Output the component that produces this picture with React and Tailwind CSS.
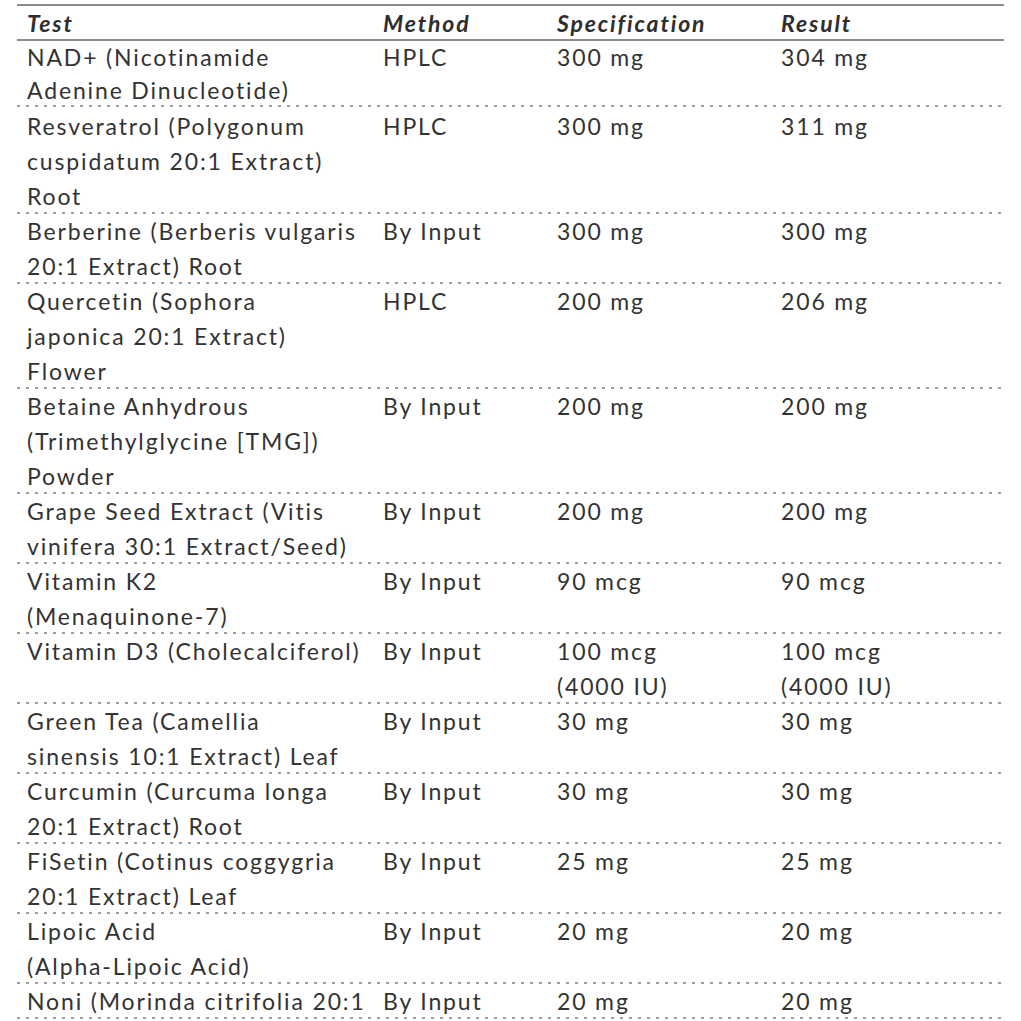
const rows = [
  { test: ["NAD+ (Nicotinamide", "Adenine Dinucleotide)"], method: "HPLC", spec: ["300 mg"], result: ["304 mg"], tight: true },
  { test: ["Resveratrol (Polygonum", "cuspidatum 20:1 Extract)", "Root"], method: "HPLC", spec: ["300 mg"], result: ["311 mg"] },
  { test: ["Berberine (Berberis vulgaris", "20:1 Extract) Root"], method: "By Input", spec: ["300 mg"], result: ["300 mg"] },
  { test: ["Quercetin (Sophora", "japonica 20:1 Extract)", "Flower"], method: "HPLC", spec: ["200 mg"], result: ["206 mg"] },
  { test: ["Betaine Anhydrous", "(Trimethylglycine [TMG])", "Powder"], method: "By Input", spec: ["200 mg"], result: ["200 mg"] },
  { test: ["Grape Seed Extract (Vitis", "vinifera 30:1 Extract/Seed)"], method: "By Input", spec: ["200 mg"], result: ["200 mg"] },
  { test: ["Vitamin K2", "(Menaquinone-7)"], method: "By Input", spec: ["90 mcg"], result: ["90 mcg"] },
  { test: ["Vitamin D3 (Cholecalciferol)"], method: "By Input", spec: ["100 mcg", "(4000 IU)"], result: ["100 mcg", "(4000 IU)"] },
  { test: ["Green Tea (Camellia", "sinensis 10:1 Extract) Leaf"], method: "By Input", spec: ["30 mg"], result: ["30 mg"] },
  { test: ["Curcumin (Curcuma longa", "20:1 Extract) Root"], method: "By Input", spec: ["30 mg"], result: ["30 mg"] },
  { test: ["FiSetin (Cotinus coggygria", "20:1 Extract) Leaf"], method: "By Input", spec: ["25 mg"], result: ["25 mg"] },
  { test: ["Lipoic Acid", "(Alpha-Lipoic Acid)"], method: "By Input", spec: ["20 mg"], result: ["20 mg"] },
  { test: ["Noni (Morinda citrifolia 20:1"], method: "By Input", spec: ["20 mg"], result: ["20 mg"] },
];

function Lines({ items }) {
  return (
    <div className="flex flex-col">
      {items.map((t, i) => (
        <span key={i} className="whitespace-nowrap">{t}</span>
      ))}
    </div>
  );
}

export default function App() {
  return (
    <div className="w-[1021px] h-[1021px] overflow-hidden bg-white pt-[4px] font-['Lato',sans-serif] text-[23px] tracking-[1.85px] text-[#333]">
      <div className="ml-[17px] w-[987px]">
        <div className="grid grid-cols-[356px_174px_224px_233px] h-[37px] items-center border-y-2 border-[#8c8c8c] italic font-bold text-[#2e2e2e]">
          <div className="pl-[10px]">Test</div>
          <div className="pl-[10px]">Method</div>
          <div className="pl-[10px]">Specification</div>
          <div className="pl-[10px]">Result</div>
        </div>
        {rows.map((r, i) => (
          <div
            key={i}
            className={
              "grid grid-cols-[356px_174px_224px_233px] bg-[repeating-linear-gradient(to_right,#a0a0a0_0_3px,transparent_3px_9px)] bg-[length:100%_2px] bg-bottom bg-no-repeat " +
              (r.tight ? "leading-[33px]" : "leading-[35px] pt-[2px] -mb-[2px]")
            }
          >
            <div className="pl-[10px]"><Lines items={r.test} /></div>
            <div className="pl-[10px]">{r.method}</div>
            <div className="pl-[10px]"><Lines items={r.spec} /></div>
            <div className="pl-[10px]"><Lines items={r.result} /></div>
          </div>
        ))}
      </div>
    </div>
  );
}
